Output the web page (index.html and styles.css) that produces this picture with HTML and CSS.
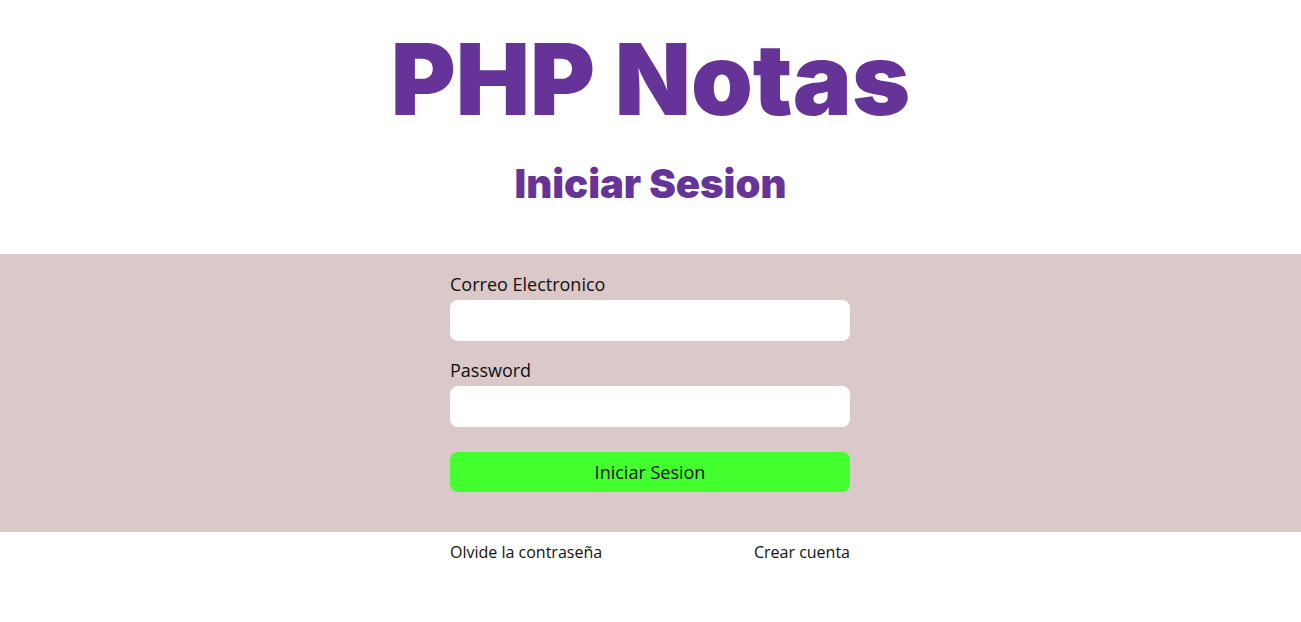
FILE: index.html
```html
<!DOCTYPE html>
<html lang="es">
<head>
<meta charset="utf-8">
<title>PHP Notas</title>
<link rel="stylesheet" href="styles.css">
</head>
<body>
<header class="header">
  <h1 class="title">PHP Notas</h1>
  <h2 class="subtitle">Iniciar Sesion</h2>
</header>
<main class="band">
  <form class="form">
    <div class="field">
      <label class="label" for="email">Correo Electronico</label>
      <input class="input" type="email" id="email">
    </div>
    <div class="field">
      <label class="label" for="password">Password</label>
      <input class="input" type="password" id="password">
    </div>
    <button class="button" type="button">Iniciar Sesion</button>
  </form>
</main>
<nav class="links">
  <a class="link" href="#">Olvide la contraseña</a>
  <a class="link" href="#">Crear cuenta</a>
</nav>
</body>
</html>
```
FILE: styles.css
```css
* { box-sizing: border-box; }
html, body { margin: 0; padding: 0; background: #fff; }
body { font-family: "Open Sans", sans-serif; color: #111; }
.header { text-align: center; padding-top: 19px; height: 254px; }
.title {
  margin: 0;
  font-family: Inter, sans-serif;
  font-weight: 900;
  font-size: 99px;
  line-height: 120px;
  color: #663399;
}
.subtitle {
  margin: 21px 0 0;
  font-family: Inter, sans-serif;
  font-weight: 900;
  font-size: 40px;
  line-height: 48px;
  color: #663399;
}
.band { background: #dbc8c8; padding: 20px 0 40px; }
.form { width: 401px; padding-right: 1px; margin: 0 auto; display: flex; flex-direction: column; }
.field { display: flex; flex-direction: column; margin-bottom: 19px; }
.label { font-size: 18px; line-height: 20px; margin-bottom: 6px; }
.input {
  height: 41px; border: none; border-radius: 8px; background: #fff;
  font: inherit; padding: 0 10px;
}
.button {
  height: 40px; border: none; border-radius: 8px; background: #44ff2e;
  font-family: "Open Sans", sans-serif; font-size: 18px; color: #111; margin-top: 6px;
}
.links { width: 401px; padding-right: 1px; margin: 0 auto; display: flex; justify-content: space-between; padding-top: 9px; }
.link { color: #111; text-decoration: none; font-size: 16px; line-height: 22px; }
```
